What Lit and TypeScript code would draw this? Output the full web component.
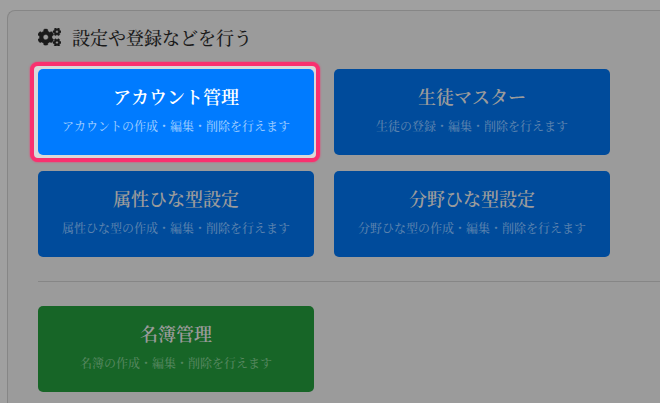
import { LitElement, html, css } from "lit";
import { customElement } from "lit/decorators.js";

const rows = [
  ["アカウント管理", "アカウントの作成・編集・削除を行えます", "focus"],
  ["生徒マスター", "生徒の登録・編集・削除を行えます", ""],
  ["属性ひな型設定", "属性ひな型の作成・編集・削除を行えます", ""],
  ["分野ひな型設定", "分野ひな型の作成・編集・削除を行えます", ""],
];
const COGS = "M512.1 191l-8.2 14.3c-3 5.3-9.4 7.5-15.1 5.4-11.8-4.4-22.6-10.7-32.1-18.6-4.6-3.8-5.8-10.5-2.8-15.7l8.2-14.3c-6.9-8-12.3-17.3-15.9-27.4h-16.5c-6 0-11.2-4.3-12.2-10.3-2-12-2.1-24.6 0-37.1 1-6 6.2-10.4 12.2-10.4h16.5c3.6-10.1 9-19.4 15.9-27.4l-8.2-14.3c-3-5.2-1.9-11.9 2.8-15.7 9.5-7.9 20.4-14.2 32.1-18.6 5.7-2.1 12.1.1 15.1 5.4l8.2 14.3c10.5-1.9 21.2-1.9 31.7 0L552 6.3c3-5.3 9.4-7.5 15.1-5.4 11.8 4.4 22.6 10.7 32.1 18.6 4.6 3.8 5.8 10.5 2.8 15.7l-8.2 14.3c6.9 8 12.3 17.3 15.9 27.4h16.5c6 0 11.2 4.3 12.2 10.3 2 12 2.1 24.6 0 37.1-1 6-6.2 10.4-12.2 10.4h-16.5c-3.6 10.1-9 19.4-15.9 27.4l8.2 14.3c3 5.2 1.9 11.9-2.8 15.7-9.5 7.9-20.4 14.2-32.1 18.6-5.7 2.1-12.1-.1-15.1-5.4l-8.2-14.3c-10.4 1.9-21.2 1.9-31.7 0zm-10.5-58.8c38.5 29.6 82.4-14.3 52.8-52.8-38.5-29.7-82.4 14.3-52.8 52.8zM386.3 286.1l33.7 16.8c10.1 5.8 14.5 18.1 10.5 29.1-8.9 24.2-26.4 46.4-42.6 65.8-7.4 8.9-20.2 11.1-30.3 5.3l-29.1-16.8c-16 13.7-34.6 24.6-54.9 31.7v33.6c0 11.6-8.3 21.6-19.7 23.6-24.6 4.2-50.4 4.4-75.9 0-11.5-2-20-11.9-20-23.6V418c-20.3-7.2-38.9-18-54.9-31.7L74 403c-10 5.8-22.9 3.6-30.3-5.3-16.2-19.4-33.3-41.6-42.2-65.7-4-10.9.4-23.2 10.5-29.1l33.3-16.8c-3.9-20.9-3.9-42.4 0-63.4L12 205.8c-10.1-5.8-14.6-18.1-10.5-29 8.9-24.2 26-46.4 42.2-65.8 7.4-8.9 20.2-11.1 30.3-5.3l29.1 16.8c16-13.7 34.6-24.6 54.9-31.7V57.1c0-11.5 8.2-21.5 19.6-23.5 24.6-4.2 50.5-4.4 76-.1 11.5 2 20 11.9 20 23.6v33.6c20.3 7.2 38.9 18 54.9 31.7l29.1-16.8c10-5.8 22.9-3.6 30.3 5.3 16.2 19.4 33.2 41.6 42.1 65.8 4 10.9.1 23.2-10 29.1l-33.7 16.8c3.9 21 3.9 42.5 0 63.5zm-117.6 21.1c59.2-77-28.7-164.9-105.7-105.7-59.2 77 28.7 164.9 105.7 105.7zm243.4 182.7l-8.2 14.3c-3 5.3-9.4 7.5-15.1 5.4-11.8-4.4-22.6-10.7-32.1-18.6-4.6-3.8-5.8-10.5-2.8-15.7l8.2-14.3c-6.9-8-12.3-17.3-15.9-27.4h-16.5c-6 0-11.2-4.3-12.2-10.3-2-12-2.1-24.6 0-37.1 1-6 6.2-10.4 12.2-10.4h16.5c3.6-10.1 9-19.4 15.9-27.4l-8.2-14.3c-3-5.2-1.9-11.9 2.8-15.7 9.5-7.9 20.4-14.2 32.1-18.6 5.7-2.1 12.1.1 15.1 5.4l8.2 14.3c10.5-1.9 21.2-1.9 31.7 0l8.2-14.3c3-5.3 9.4-7.5 15.1-5.4 11.8 4.4 22.6 10.7 32.1 18.6 4.6 3.8 5.8 10.5 2.8 15.7l-8.2 14.3c6.9 8 12.3 17.3 15.9 27.4h16.5c6 0 11.2 4.3 12.2 10.3 2 12 2.1 24.6 0 37.1-1 6-6.2 10.4-12.2 10.4h-16.5c-3.6 10.1-9 19.4-15.9 27.4l8.2 14.3c3 5.2 1.9 11.9-2.8 15.7-9.5 7.9-20.4 14.2-32.1 18.6-5.7 2.1-12.1-.1-15.1-5.4l-8.2-14.3c-10.4 1.9-21.2 1.9-31.7 0zM501.6 431c38.5 29.6 82.4-14.3 52.8-52.8-38.5-29.6-82.4 14.3-52.8 52.8z";

@customElement("app-root")
export class AppRoot extends LitElement {
  static styles = css`
    :host { display: block; height: 403px; overflow: hidden; background: #a0a0a0; font-family: "Noto Serif CJK JP", "Noto Serif JP", "Source Han Serif", "IPAMincho", "Liberation Serif", "Noto Sans CJK JP", serif; }
    .strip { height: 403px; padding: 10px 0 0 7px; box-sizing: border-box; }
    .card { border: 1px solid #868686; border-right: none; border-bottom: none; border-radius: 8px 0 0 0; background: #9b9b9b; height: 393px; box-sizing: border-box; padding: 13px 0 0 30px; }
    .head { display: flex; align-items: center; gap: 11px; height: 26px; font-size: 18px; font-weight: 500; color: #1a1a1a; }
    .head svg { width: 23px; height: 18.4px; fill: #1a1a1a; stroke: #1a1a1a; stroke-width: 12; }
    .grid { display: grid; grid-template-columns: 276px 276px; gap: 16px 20px; margin-top: 19px; }
    .single { margin-top: 0; }
    .btn { height: 86px; border-radius: 5px; background: #004b9b; color: #9b9b9b; display: flex; flex-direction: column; align-items: center; text-align: center; box-sizing: border-box; padding-top: 15px; position: relative; }
    .btn.green { background: #176527; }
    .t { font-size: 18px; line-height: 24px; font-weight: 600; }
    .s { font-size: 12px; line-height: 16px; margin-top: 10px; font-weight: 500; color: #5a82ae; }
    .green .s { color: #55875f; }
    .focus { background: #007bff; color: #fff; z-index: 0; }
    .focus::before { content: ""; position: absolute; inset: -7px -6px -7px -8px; box-sizing: border-box; border: 4px solid #f9306f; border-radius: 8px; background: #d9d9d9; z-index: -1; box-shadow: 0 0 2px #f9306f; }
    .focus::after { content: ""; position: absolute; inset: 0; background: #007bff; border-radius: 5px; z-index: -1; }
    .focus .s { color: #99caff; }
    hr { border: none; border-top: 1px solid #868686; margin: 24px 0; }
  `;
  render() {
    return html`<div class="strip"><div class="card">
      <div class="head">
        <svg viewBox="0 0 640 512"><path d=${COGS}></path></svg>
        <span>設定や登録などを行う</span>
      </div>
      <div class="grid">
        ${rows.map(([t, s, c]) => html`<div class="btn ${c}"><div class="t">${t}</div><div class="s">${s}</div></div>`)}
      </div>
      <hr />
      <div class="grid single"><div class="btn green"><div class="t">名簿管理</div><div class="s">名簿の作成・編集・削除を行えます</div></div></div>
    </div></div>`;
  }
}
